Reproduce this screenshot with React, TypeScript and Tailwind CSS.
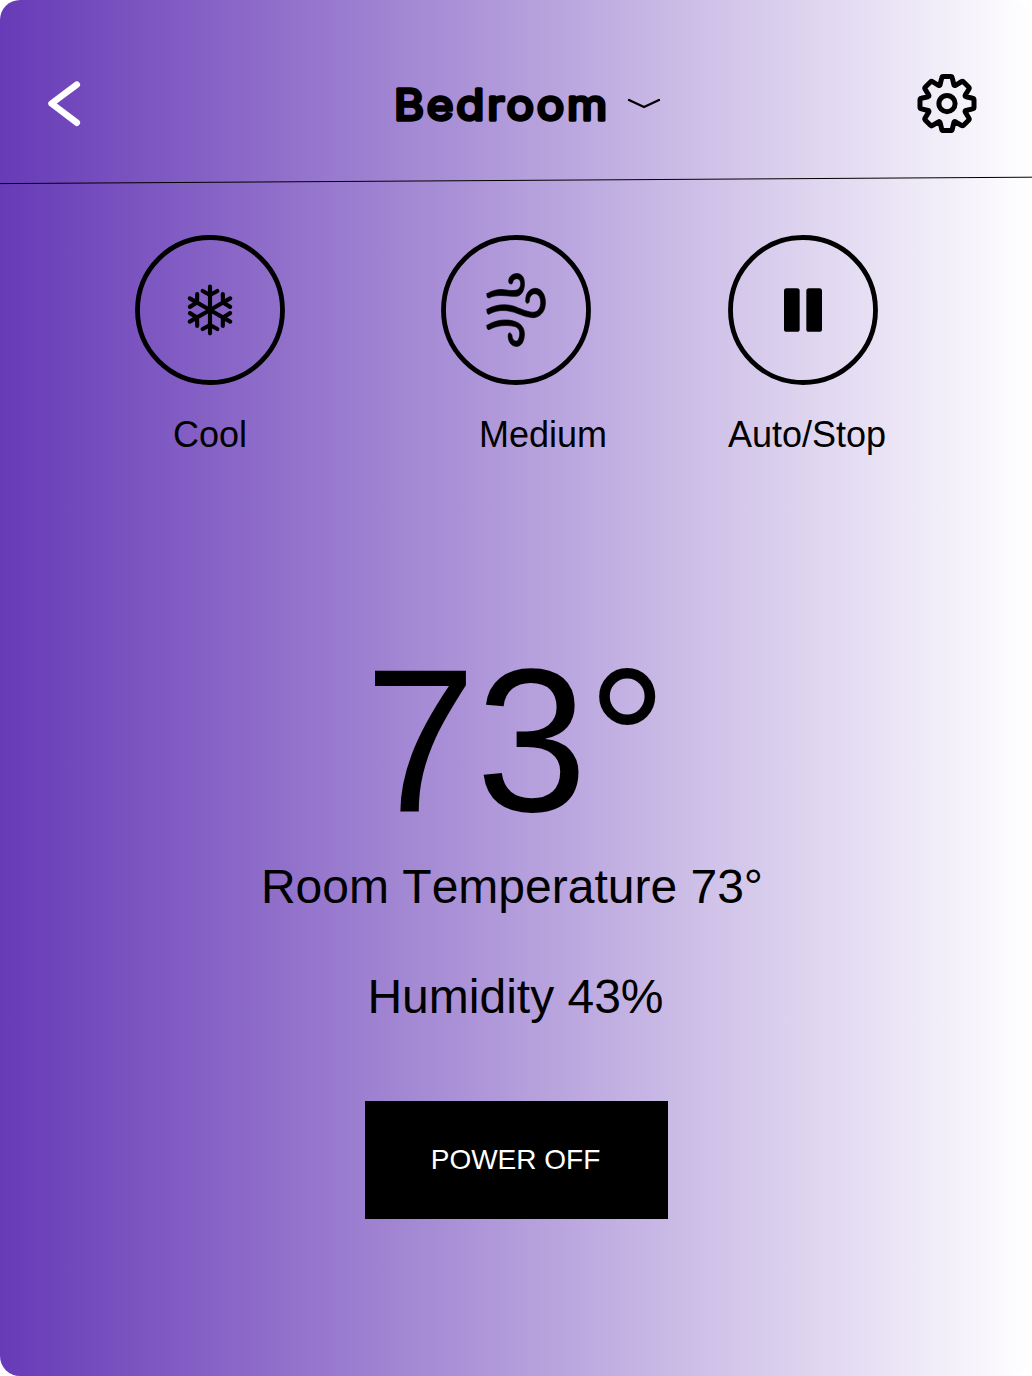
import React from "react";

function gearPath() {
  const points: string[] = [];
  for (let k = 0; k < 8; k++) {
    const a = (k * Math.PI) / 4;
    const at = (x: number, y: number) =>
      `${(x * Math.cos(a) - y * Math.sin(a)).toFixed(2)},${(x * Math.sin(a) + y * Math.cos(a)).toFixed(2)}`;
    points.push(
      `${k === 0 ? "M" : "L"}${at(-6.9, -18.9)} L${at(-5.3, -25.6)} Q${at(-5, -27)} ${at(-3.6, -27)} L${at(3.6, -27)} Q${at(5, -27)} ${at(5.3, -25.6)} L${at(6.9, -18.9)} Q${at(7.3, -17.6)} ${at(8.48, -18.24)}`
    );
  }
  return points.join(" ") + " Z";
}

function Gear() {
  return (
    <svg className="size-[60px]" viewBox="-30 -29.6 60 60" fill="none" stroke="#000" strokeWidth="5" strokeLinejoin="round">
      <path d={gearPath()} />
      <circle r="8.1" />
    </svg>
  );
}

function Snow() {
  return (
    <g strokeWidth="12.5">
      {[0, 60, 120, 180, 240, 300].map((a) => (
        <path key={a} transform={`rotate(${a} 240 240)`} d="M240 240V170M218 183L240 195L262 183" />
      ))}
    </g>
  );
}

function Wind() {
  return (
    <g fill="#000" strokeWidth="2">
      <path d="M153 191C176 177 196 177 212 180C224 182 234 182 243 180C255 175 257 157 250 149C243 143 231 147 230 158C227 165 218 162 218 154C218 127 258 121 264 149C269 176 258 198 241 199C214 200 185 190 159 204C153 205 152 197 153 191Z" />
      <path d="M153 238C181 221 218 220 245 233C275 245 291 250 302 244C317 236 318 205 306 195C294 185 280 195 280 213C279 223 269 221 269 212C269 187 283 175 299 175C320 176 330 200 328 223C326 250 308 263 291 263C263 262 241 245 212 242C190 240 174 244 158 253C153 252 152 244 153 238Z" />
      <path d="M153 286C180 268 214 266 239 275C266 285 269 310 262 332C256 353 231 355 221 337C217 329 214 315 219 309C226 307 228 315 229 323C232 333 242 337 247 329C255 312 252 292 234 289C207 284 183 286 159 299C153 299 152 292 153 286Z" />
    </g>
  );
}

function Pause() {
  return (
    <g fill="#000" stroke="none">
      <rect x="183" y="174.500" width="47" height="131" rx="8" />
      <rect x="250" y="174.500" width="47" height="131" rx="8" />
    </g>
  );
}

function Mode({ label, className, labelClass, children }: { label: string; className: string; labelClass: string; children: React.ReactNode }) {
  return (
    <button className={`flex w-[150px] flex-col ${className}`}>
      <svg className="size-[150px]" viewBox="15 15 450 450" fill="none" stroke="#000" strokeLinecap="round" strokeLinejoin="round">
        <circle cx="240" cy="240" r="217.500" strokeWidth="14.500" />
        {children}
      </svg>
      <span className={`mt-[29px] text-[36px] leading-[42px] whitespace-nowrap ${labelClass}`}>{label}</span>
    </button>
  );
}

export default function App() {
  return (
    <div className="bg-white">
      <main className="flex h-[1376px] w-[1032px] flex-col overflow-hidden rounded-[20px] bg-[linear-gradient(90deg,#673ab7,#ffffff)] font-['Liberation_Sans',Arial,sans-serif] text-black">
        <header className="flex h-[176px] items-start pr-[55px] pl-[47px]">
          <button aria-label="Back" className="mt-[80px]">
            <svg className="h-[47px] w-[34px]" viewBox="0 0 34 47" fill="none" stroke="#fff" strokeWidth="6.500" strokeLinecap="round" strokeLinejoin="round">
              <path d="M29.800 4.700L4.500 23.500L29.800 42.700" />
            </svg>
          </button>
          <button className="mt-[76px] ml-[310px] flex items-start" aria-label="Bedroom">
            <svg className="h-[60px] w-[220px]" viewBox="0 0 220 60">
              <text x="3" y="44.300" fontSize="42.500" fontWeight="400" letterSpacing="2.600" textLength="216" lengthAdjust="spacingAndGlyphs" stroke="#000" strokeWidth="3.400" strokeLinejoin="round" strokeLinecap="round" className="font-['Inter',sans-serif]">Bedroom</text>
            </svg>
            <svg className="mt-[20px] ml-[16px] h-[14px] w-[34px]" viewBox="0 0 34 14" fill="none" stroke="#000" strokeWidth="2.300" strokeLinecap="round">
              <path d="M2 4L17 11L32 4" />
            </svg>
          </button>
          <button aria-label="Settings" className="mt-[74px] ml-auto"><Gear /></button>
        </header>
        <svg className="h-[9px] w-full shrink-0" viewBox="0 0 1032 9">
          <path d="M0 7.600L1032 1.200" stroke="#000" strokeWidth="1" />
        </svg>
        <section className="mt-[50px] flex pl-[135px]">
          <Mode label="Cool" className="" labelClass="self-center"><Snow /></Mode>
          <Mode label="Medium" className="ml-[156px]" labelClass="ml-[38px] self-start"><Wind /></Mode>
          <Mode label="Auto/Stop" className="ml-[137px]" labelClass="self-start"><Pause /></Mode>
        </section>
        <section className="flex flex-col items-center [font-kerning:none]">
          <div className="mt-[169px] origin-center scale-y-[1.025] text-[200px] leading-[230px]">73°</div>
          <div className="mt-[5px] pr-[8px] text-[48px] leading-[54px]">Room Temperature 73°</div>
          <div className="mt-[56px] pr-px text-[48px] leading-[54px]">Humidity 43%</div>
          <button className="mt-[77px] h-[118px] w-[303px] bg-black pr-px text-[28px] text-white">POWER OFF</button>
        </section>
      </main>
    </div>
  );
}
